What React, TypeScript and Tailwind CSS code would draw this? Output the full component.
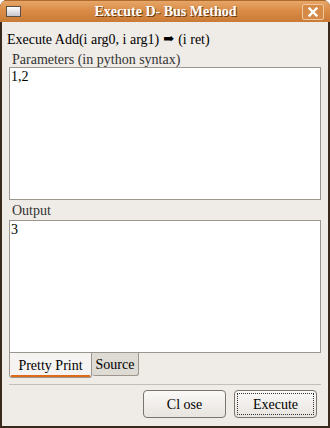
import React, { useState } from 'react';

const serif = { fontFamily: '"Liberation Serif", "DejaVu Serif", serif' };

const App = () => {
  const [tab, setTab] = useState('pretty');

  return (
    <div className="w-[330px] h-[428px] bg-[#3a2a1e] rounded-t-[7px] overflow-hidden flex flex-col" style={serif}>
      {/* Title bar */}
      <div className="h-[22px] shrink-0 flex items-center px-[6px] bg-gradient-to-b from-[#e6a667] via-[#d98a44] to-[#c97a36] border-t border-[#b06a2c]">
        <div className="w-[15px] h-[11px] border border-[#5a5048] bg-gradient-to-b from-[#ffffff] to-[#c9c6d0]" />
        <div className="flex-1 text-center text-white font-bold text-[14px] leading-none pl-[8px] [text-shadow:1px_1px_0_#6b3d14]">
          Execute D- Bus Method
        </div>
        <div className="w-[22px] h-[16px] border border-[#f0c89c] rounded-[2px] flex items-center justify-center bg-[#d58a47]">
          <svg width="10" height="10" viewBox="0 0 10 10">
            <path d="M1.5 1.5 L8.5 8.5 M8.5 1.5 L1.5 8.5" stroke="#ffffff" strokeWidth="2.4" strokeLinecap="square" />
          </svg>
        </div>
      </div>

      {/* Body */}
      <div className="flex-1 mx-[2px] mb-[2px] bg-[#efebe7] flex flex-col px-[7px] text-[14px] text-black">
        <div className="h-[33px] flex items-center pt-[1px] -ml-[2px]">
          Execute Add(i arg0, i arg1) <span className="mx-[4px] text-[13px]">➡</span> (i ret)
        </div>

        <div className="pl-[3px] h-[12px] leading-[12px] text-[#333333] -mt-[1px]">Parameters (in python syntax)</div>
        <div className="mt-[1px] h-[133px] bg-white border border-[#9d968e] px-[1px] pt-[1px] text-[14px] leading-[16px]">
          1,2
        </div>

        <div className="pl-[3px] h-[19px] leading-[19px] text-[#333333] mt-[1px]">Output</div>
        <div className="h-[133px] bg-white border border-[#9d968e] px-[1px] pt-[1px] text-[14px] leading-[16px]">
          3
        </div>

        {/* Tabs */}
        <div className="flex items-start h-[25px]">
          <button
            onClick={() => setTab('pretty')}
            className={`h-[25px] w-[83px] border border-t-0 border-[#9d968e] rounded-b-[3px] text-[14px] relative ${tab === 'pretty' ? 'bg-[#f6f4f2]' : 'bg-[#dedad4]'}`}
          >
            Pretty Print
            {tab === 'pretty' && <span className="absolute left-[1px] right-[1px] bottom-0 h-[2px] bg-[#e06a18]" />}
          </button>
          <button
            onClick={() => setTab('source')}
            className={`h-[23px] w-[47px] border border-t-0 border-l-0 border-[#9d968e] rounded-b-[3px] text-[14px] relative ${tab === 'source' ? 'bg-[#f6f4f2]' : 'bg-[#dedad4]'}`}
          >
            Source
            {tab === 'source' && <span className="absolute left-[1px] right-[1px] bottom-0 h-[2px] bg-[#e06a18]" />}
          </button>
        </div>

        <div className="mt-[6px] h-[2px] border-t border-[#c4beb6] border-b-white" />

        {/* Buttons */}
        <div className="flex justify-end gap-[8px] pt-[4px] pr-[4px]">
          <button className="w-[83px] h-[28px] rounded-[4px] border border-[#7a746c] bg-gradient-to-b from-[#faf9f7] to-[#e8e4df] text-[14px]">
            Cl ose
          </button>
          <button className="w-[83px] h-[28px] rounded-[4px] border border-[#7a746c] bg-gradient-to-b from-[#faf9f7] to-[#e8e4df] text-[14px] p-[2px]">
            <span className="w-full h-full flex items-center justify-center border border-dotted border-[#333333]">Execute</span>
          </button>
        </div>
      </div>
    </div>
  );
};

export default App;
